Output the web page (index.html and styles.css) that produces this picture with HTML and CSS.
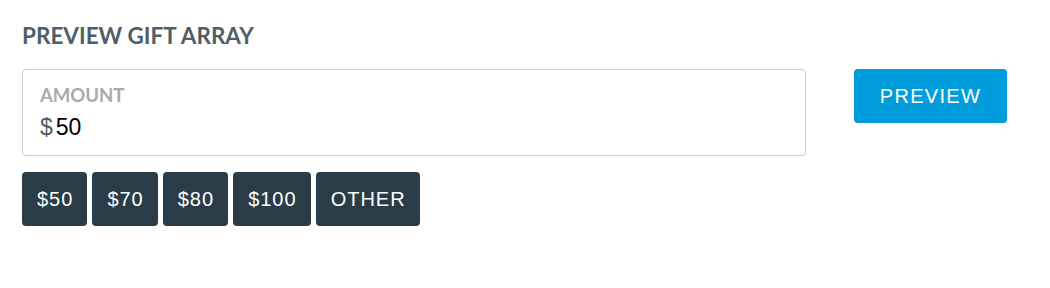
FILE: index.html
```html
<!DOCTYPE html>
<html>
<head>
<meta charset="utf-8">
<link rel="stylesheet" href="styles.css">
</head>
<body>
<div class="panel">
  <h2 class="title">PREVIEW GIFT ARRAY</h2>
  <div class="row">
    <div class="field">
      <div class="label">AMOUNT</div>
      <div class="value"><span class="cur">$</span><span class="num">50</span></div>
    </div>
    <button class="preview">PREVIEW</button>
  </div>
  <div class="chips">
    <button class="chip">$50</button>
    <button class="chip">$70</button>
    <button class="chip">$80</button>
    <button class="chip">$100</button>
    <button class="chip">OTHER</button>
  </div>
</div>
</body>
</html>
```

FILE: styles.css
```css
html, body {
  margin: 0;
  padding: 0;
  background: #ffffff;
}
.panel {
  padding: 22px 22px 0 22px;
}
.title {
  margin: 0;
  font-family: Lato, "Liberation Sans", sans-serif;
  font-weight: 700;
  font-size: 22.5px;
  line-height: 28px;
  color: #4f5f69;
}
.row {
  display: flex;
  align-items: flex-start;
  gap: 48px;
  margin-top: 19px;
}
.field {
  box-sizing: border-box;
  width: 784px;
  height: 87px;
  border: 1px solid #cccccc;
  border-radius: 4px;
  padding: 14px 17px 0 17px;
}
.label {
  font-family: Lato, "Liberation Sans", sans-serif;
  font-weight: 700;
  font-size: 18.5px;
  line-height: 22px;
  color: #aaaaaa;
}
.value {
  display: flex;
  align-items: baseline;
  gap: 3px;
  margin-top: 7px;
  font-family: "Liberation Sans", Arial, sans-serif;
  font-size: 23px;
  line-height: 28px;
}
.cur {
  color: #4f5f69;
}
.num {
  color: #000000;
}
.preview {
  box-sizing: border-box;
  height: 54px;
  width: 153px;
  border: none;
  border-radius: 4px;
  background: #009ddc;
  color: #ffffff;
  font-family: "Liberation Sans", Arial, sans-serif;
  font-size: 20px;
  letter-spacing: 1.3px;
  padding: 0;
}
.chips {
  display: flex;
  gap: 5px;
  margin-top: 16px;
}
.chip {
  box-sizing: border-box;
  height: 54px;
  border: none;
  border-radius: 4px;
  background: #2a3c47;
  color: #ffffff;
  font-family: "Liberation Sans", Arial, sans-serif;
  font-size: 20px;
  letter-spacing: 1px;
  padding: 0 14px 0 15px;
}
```
